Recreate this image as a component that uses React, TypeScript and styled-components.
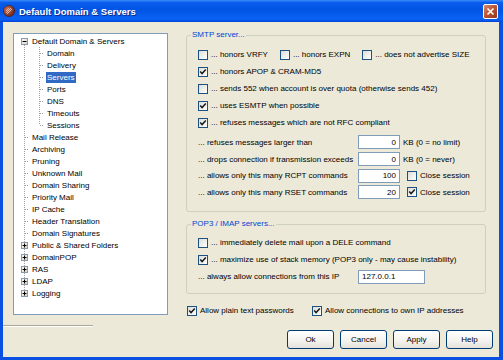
import styled, { createGlobalStyle } from "styled-components";

type CellKind = "pipe" | "tee" | "corner" | "first";

interface TreeItem {
  label: string;
  level: 0 | 1;
  kind: CellKind;
  box?: "plus" | "minus";
  selected?: boolean;
}

const treeItems: TreeItem[] = [
  { label: "Default Domain & Servers", level: 0, kind: "first", box: "minus" },
  { label: "Domain", level: 1, kind: "tee" },
  { label: "Delivery", level: 1, kind: "tee" },
  { label: "Servers", level: 1, kind: "tee", selected: true },
  { label: "Ports", level: 1, kind: "tee" },
  { label: "DNS", level: 1, kind: "tee" },
  { label: "Timeouts", level: 1, kind: "tee" },
  { label: "Sessions", level: 1, kind: "corner" },
  { label: "Mail Release", level: 0, kind: "tee" },
  { label: "Archiving", level: 0, kind: "tee" },
  { label: "Pruning", level: 0, kind: "tee" },
  { label: "Unknown Mail", level: 0, kind: "tee" },
  { label: "Domain Sharing", level: 0, kind: "tee" },
  { label: "Priority Mail", level: 0, kind: "tee" },
  { label: "IP Cache", level: 0, kind: "tee" },
  { label: "Header Translation", level: 0, kind: "tee" },
  { label: "Domain Signatures", level: 0, kind: "tee" },
  { label: "Public & Shared Folders", level: 0, kind: "tee", box: "plus" },
  { label: "DomainPOP", level: 0, kind: "tee", box: "plus" },
  { label: "RAS", level: 0, kind: "tee", box: "plus" },
  { label: "LDAP", level: 0, kind: "tee", box: "plus" },
  { label: "Logging", level: 0, kind: "corner", box: "plus" },
];

const limits = [
  { label: "... refuses messages larger than", value: "0", note: "KB (0 = no limit)" },
  { label: "... drops connection if transmission exceeds", value: "0", note: "KB (0 = never)" },
  { label: "... allows only this many RCPT commands", value: "100", close: false },
  { label: "... allows only this many RSET commands", value: "20", close: true },
];

const TreeCell = ({ kind, box }: { kind: CellKind; box?: "plus" | "minus" }) => {
  const top = kind === "first" ? 6 : 0;
  const bottom = kind === "corner" ? 6 : 12;
  return (
    <svg width="15" height="12" viewBox="0 0 15 12" style={{ flex: "none" }}>
      <line x1="10.5" y1={top} x2="10.5" y2={bottom} stroke="#a0a0a0" strokeDasharray="1 1" />
      {kind !== "pipe" && (
        <line x1="11" y1="6.5" x2="15" y2="6.5" stroke="#a0a0a0" strokeDasharray="1 1" />
      )}
      {box && (
        <>
          <defs>
            <linearGradient id="tb" x1="0" y1="0" x2="1" y2="1">
              <stop offset="0" stopColor="#ffffff" />
              <stop offset="1" stopColor="#d4d0c8" />
            </linearGradient>
          </defs>
          <rect x="7.5" y="3.5" width="6" height="6" fill="url(#tb)" stroke="#8a9aae" />
          <line x1="8.5" y1="6.5" x2="12.5" y2="6.5" stroke="#000" />
          {box === "plus" && <line x1="10.5" y1="4.5" x2="10.5" y2="8.5" stroke="#000" />}
        </>
      )}
    </svg>
  );
};

const Check = ({ checked }: { checked?: boolean }) => (
  <Box>
    {checked && (
      <svg width="8" height="8" viewBox="0 0 8 8">
        <path d="M1.2 3.6 L3.1 5.6 L6.8 1.6" fill="none" stroke="#1a1a1a" strokeWidth="1.5" />
      </svg>
    )}
  </Box>
);

const CheckOption = ({ checked, children }: { checked?: boolean; children: string }) => (
  <CheckItem>
    <Check checked={checked} />
    <span>{children}</span>
  </CheckItem>
);

const App = () => (
  <>
    <GlobalStyle />
    <Window>
      <TitleBar>
        <svg width="12" height="12" viewBox="0 0 12 12">
          <defs>
            <radialGradient id="ic" cx="0.35" cy="0.35" r="0.7">
              <stop offset="0" stopColor="#c8745a" />
              <stop offset="1" stopColor="#6e2417" />
            </radialGradient>
          </defs>
          <circle cx="6" cy="6" r="5.6" fill="url(#ic)" stroke="#4a1a10" strokeWidth="0.6" />
          <path d="M3 8 L8 3 M4 9 L9 4 M3.2 6 L6 3.2" stroke="#f1d2c2" strokeWidth="0.8" />
        </svg>
        <Title>Default Domain &amp; Servers</Title>
        <CloseButton>
          <svg width="9" height="9" viewBox="0 0 9 9">
            <path d="M1.5 1.5 L7.5 7.5 M7.5 1.5 L1.5 7.5" stroke="#fff" strokeWidth="1.6" />
          </svg>
        </CloseButton>
      </TitleBar>
      <Frame>
        <Main>
          <Tree>
            {treeItems.map((item) => (
              <TreeRow key={item.label}>
                {item.level === 1 && <TreeCell kind="pipe" />}
                <TreeCell kind={item.kind} box={item.box} />
                <TreeLabel $selected={item.selected}>{item.label}</TreeLabel>
              </TreeRow>
            ))}
          </Tree>
          <RightCol>
            <Group $height={177} $top={10} style={{ marginTop: 2 }}>
              <Legend>SMTP server...</Legend>
              <CheckRow>
                <CheckOption>... honors VRFY</CheckOption>
                <CheckOption>... honors EXPN</CheckOption>
                <CheckOption>... does not advertise SIZE</CheckOption>
              </CheckRow>
              <CheckRow>
                <CheckOption checked>... honors APOP &amp; CRAM-MD5</CheckOption>
              </CheckRow>
              <CheckRow>
                <CheckOption>... sends 552 when account is over quota (otherwise sends 452)</CheckOption>
              </CheckRow>
              <CheckRow>
                <CheckOption checked>... uses ESMTP when possible</CheckOption>
              </CheckRow>
              <CheckRow>
                <CheckOption checked>... refuses messages which are not RFC compliant</CheckOption>
              </CheckRow>
              <Fields>
                {limits.map((row) => (
                  <FieldRow key={row.label}>
                    <span>{row.label}</span>
                    <TextInput $align="right" readOnly value={row.value} />
                    {row.note ? (
                      <Note>{row.note}</Note>
                    ) : (
                      <NoteCheck>
                        <CheckOption checked={row.close}>Close session</CheckOption>
                      </NoteCheck>
                    )}
                  </FieldRow>
                ))}
              </Fields>
            </Group>
            <Group $height={70} $top={9} style={{ marginTop: 12 }}>
              <Legend>POP3 / IMAP servers...</Legend>
              <CheckRow>
                <CheckOption>... immediately delete mail upon a DELE command</CheckOption>
              </CheckRow>
              <CheckRow>
                <CheckOption checked>... maximize use of stack memory (POP3 only - may cause instability)</CheckOption>
              </CheckRow>
              <IpRow>
                <span>... always allow connections from this IP</span>
                <TextInput $align="left" readOnly value="127.0.0.1" />
              </IpRow>
            </Group>
            <BottomChecks>
              <CheckOption checked>Allow plain text passwords</CheckOption>
              <CheckOption checked>Allow connections to own IP addresses</CheckOption>
            </BottomChecks>
          </RightCol>
        </Main>
        <Footer>
          <Separator />
          <Buttons>
            <Button>Ok</Button>
            <Button>Cancel</Button>
            <Button>Apply</Button>
            <Button>Help</Button>
          </Buttons>
        </Footer>
      </Frame>
    </Window>
  </>
);

export default App;

const GlobalStyle = createGlobalStyle`
  html, body {
    margin: 0;
    padding: 0;
    background: #ffffff;
  }
  body {
    font-family: "Liberation Sans", Arial, sans-serif;
    font-size: 8px;
  }
`;

const Window = styled.div`
  width: 503px;
  height: 360px;
  display: flex;
  flex-direction: column;
  font-family: "Liberation Sans", Arial, sans-serif;
  font-size: 8px;
  color: #000;
`;

const TitleBar = styled.div`
  flex: none;
  height: 22px;
  display: flex;
  align-items: center;
  padding: 0 5px 0 3px;
  background: linear-gradient(
    180deg,
    #3a8cf8 0%,
    #0a5cec 12%,
    #0054e3 45%,
    #0a62f5 85%,
    #0654ea 94%,
    #0043cf 100%
  );
`;

const Title = styled.span`
  flex: 1;
  margin-left: 4px;
  color: #ffffff;
  font-weight: bold;
  font-size: 9.5px;
  text-shadow: 1px 1px #0b2b8a;
  white-space: nowrap;
`;

const CloseButton = styled.div`
  width: 15px;
  height: 15px;
  box-sizing: border-box;
  border: 1px solid #ffffff;
  border-radius: 2px;
  background: linear-gradient(135deg, #d98a70 0%, #b9532f 50%, #94381d 100%);
  display: flex;
  align-items: center;
  justify-content: center;
`;

const Frame = styled.div`
  flex: 1;
  display: flex;
  flex-direction: column;
  background: #ece9d8;
  border-style: solid;
  border-color: #0a50e2;
  border-width: 0 4px 3px 3px;
`;

const Main = styled.div`
  display: flex;
  gap: 18px;
  padding: 11px 0 0 10px;
`;

const Tree = styled.div`
  width: 155px;
  height: 282px;
  box-sizing: border-box;
  border: 1px solid #7f9db9;
  background: #ffffff;
  padding-top: 1px;
  overflow: hidden;
`;

const TreeRow = styled.div`
  display: flex;
  align-items: center;
  height: 12px;
  white-space: nowrap;
`;

const TreeLabel = styled.span<{ $selected?: boolean }>`
  margin-left: 2px;
  padding: 0 1px;
  line-height: 11px;
  background: ${(p) => (p.$selected ? "#316ac5" : "transparent")};
  color: ${(p) => (p.$selected ? "#ffffff" : "#000000")};
`;

const RightCol = styled.div`
  width: 300px;
  display: flex;
  flex-direction: column;
`;

const Group = styled.div<{ $height: number; $top: number }>`
  position: relative;
  box-sizing: border-box;
  height: ${(p) => p.$height}px;
  border: 1px solid #d0d0bf;
  border-radius: 3px;
  padding: ${(p) => p.$top}px 0 0 11px;
`;

const Legend = styled.span`
  position: absolute;
  top: -6px;
  left: 4px;
  padding: 0 1px;
  line-height: 10px;
  background: #ece9d8;
  color: #0046d5;
`;

const CheckRow = styled.div`
  display: flex;
  align-items: center;
  gap: 12px;
  height: 17px;
  white-space: nowrap;
`;

const CheckItem = styled.label`
  display: flex;
  align-items: center;
  gap: 3px;
  white-space: nowrap;
`;

const Box = styled.span`
  flex: none;
  width: 10px;
  height: 10px;
  box-sizing: border-box;
  border: 1px solid #1c5180;
  background: linear-gradient(135deg, #dcdcd7 0%, #ffffff 100%);
  display: flex;
  align-items: center;
  justify-content: center;
`;

const Fields = styled.div`
  margin-top: 3px;
`;

const FieldRow = styled.div`
  display: grid;
  grid-template-columns: 160px 42px auto;
  align-items: center;
  height: 16.7px;
  white-space: nowrap;
`;

const IpRow = styled.div`
  display: grid;
  grid-template-columns: 160px 67px;
  align-items: center;
  height: 17px;
  white-space: nowrap;
`;

const TextInput = styled.input<{ $align: "left" | "right" }>`
  width: 100%;
  height: 14px;
  box-sizing: border-box;
  margin: 0;
  border: 1px solid #7f9db9;
  background: #ffffff;
  padding: 0 3px;
  font-family: inherit;
  font-size: 8px;
  color: #000;
  text-align: ${(p) => p.$align};
  outline: none;
`;

const Note = styled.span`
  margin-left: 3px;
`;

const NoteCheck = styled.div`
  margin-left: 7px;
`;

const BottomChecks = styled.div`
  display: grid;
  grid-template-columns: 125px auto;
  align-items: center;
  height: 17px;
  margin: 8px 0 0 1px;
`;

const Footer = styled.div`
  flex: 1;
  display: flex;
`;

const Separator = styled.div`
  width: 90px;
  height: 0;
  margin-top: 6px;
  border-top: 1px solid #aca899;
  border-bottom: 1px solid #ffffff;
`;

const Buttons = styled.div`
  display: flex;
  gap: 6px;
  margin: 11px 6px 0 auto;
  align-self: flex-start;
`;

const Button = styled.button`
  width: 47px;
  height: 19px;
  box-sizing: border-box;
  padding: 0;
  border: 1px solid #003c74;
  border-radius: 3px;
  background: linear-gradient(180deg, #ffffff 0%, #f3f2ee 60%, #e3e1d8 100%);
  font-family: inherit;
  font-size: 8px;
  color: #000;
`;
